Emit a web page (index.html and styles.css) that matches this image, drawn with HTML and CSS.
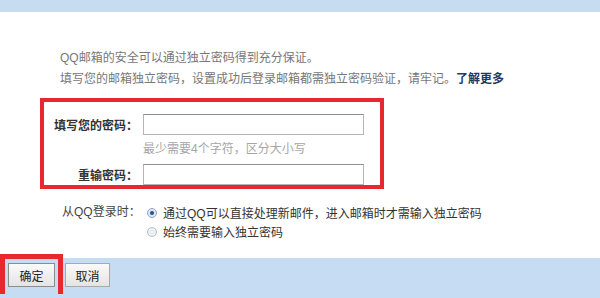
FILE: index.html
```html
<!DOCTYPE html>
<html lang="zh">
<head>
<meta charset="utf-8">
<link rel="stylesheet" href="styles.css">
</head>
<body>
<div class="topbar"></div>
<div class="page">
  <div class="intro">
    <p>QQ邮箱的安全可以通过独立密码得到充分保证。</p>
    <p>填写您的邮箱独立密码，设置成功后登录邮箱都需独立密码验证，请牢记。<a class="more">了解更多</a></p>
  </div>
  <div class="redbox">
    <div class="row">
      <span class="label">填写您的密码：</span>
      <span class="input"></span>
    </div>
    <div class="hint">最少需要4个字符，区分大小写</div>
    <div class="row">
      <span class="label">重输密码：</span>
      <span class="input"></span>
    </div>
  </div>
  <div class="options">
    <span class="olabel">从QQ登录时：</span>
    <div class="choices">
      <div class="choice"><span class="radio on"></span>通过QQ可以直接处理新邮件，进入邮箱时才需输入独立密码</div>
      <div class="choice"><span class="radio"></span>始终需要输入独立密码</div>
    </div>
  </div>
</div>
<div class="bottombar">
  <div class="okwrap"><button class="btn">确定</button></div>
  <button class="btn cancel">取消</button>
</div>
</body>
</html>
```
FILE: styles.css
```css
html, body {
  margin: 0;
  padding: 0;
  background: #ffffff;
  width: 600px;
  height: 298px;
  overflow: hidden;
  font-family: "Liberation Sans", "Noto Sans CJK SC", sans-serif;
  font-size: 12px;
  color: #444;
}
.topbar {
  height: 12px;
  background: #c8dcf1;
}
.page {
  height: 246px;
}
.intro {
  padding: 36px 0 0 60px;
  color: #777;
}
.intro p {
  margin: 0;
  line-height: 21px;
  height: 21px;
  white-space: nowrap;
}
.more {
  color: #1f3a63;
  font-weight: bold;
}
.redbox {
  margin: 8px 0 0 40px;
  width: 336px;
  height: 83px;
  border: 4px solid #e8282f;
}
.row {
  display: flex;
  align-items: center;
  gap: 5px;
}
.row:first-child {
  margin-top: 12px;
}
.label {
  width: 94px;
  text-align: right;
  font-weight: bold;
  color: #333;
}
.input {
  display: block;
  width: 219px;
  height: 19px;
  border: 1px solid #b5b5b5;
  border-top-color: #8e8e8e;
  background: #fff;
}
.hint {
  margin-left: 99px;
  height: 29px;
  line-height: 29px;
  color: #a6a6a6;
}
.options {
  display: flex;
  margin: 14px 0 0 62px;
}
.olabel {
  width: 78px;
  white-space: nowrap;
  color: #444;
  line-height: 19px;
}
.choices {
  margin-left: 7px;
}
.choice {
  display: flex;
  align-items: center;
  height: 19px;
  color: #333;
  white-space: nowrap;
}
.radio {
  width: 8px;
  height: 8px;
  border-radius: 50%;
  border: 1px solid #b8bcc4;
  background: #eceef2;
  margin-right: 6px;
  position: relative;
}
.radio.on {
  background: #dfe7f3;
  border-color: #8ea5c6;
}
.radio.on::after {
  content: "";
  position: absolute;
  left: 2px;
  top: 2px;
  width: 4px;
  height: 4px;
  border-radius: 50%;
  background: #2d4f86;
}
.bottombar {
  height: 40px;
  background: #c6dcf2;
  display: flex;
  align-items: flex-start;
}
.okwrap {
  width: 50px;
  height: 35px;
  margin-top: -4px;
  border: 5px solid #e8282f;
  border-bottom: none;
  padding: 0 0 0 3px;
  box-sizing: content-box;
}
.okwrap .btn {
  width: 47px;
}
.btn {
  font-family: "Liberation Sans", "Noto Sans CJK SC", sans-serif;
  font-size: 12px;
  color: #222;
  height: 24px;
  width: 46px;
  margin-top: 4px;
  border: 1px solid #8c8c8c;
  background: linear-gradient(#fafafa, #e4e4e4);
  padding: 0;
}
.cancel {
  width: 45px;
  margin: 5px 0 0 2px;
  border-color: #a9a9a9;
}
```
